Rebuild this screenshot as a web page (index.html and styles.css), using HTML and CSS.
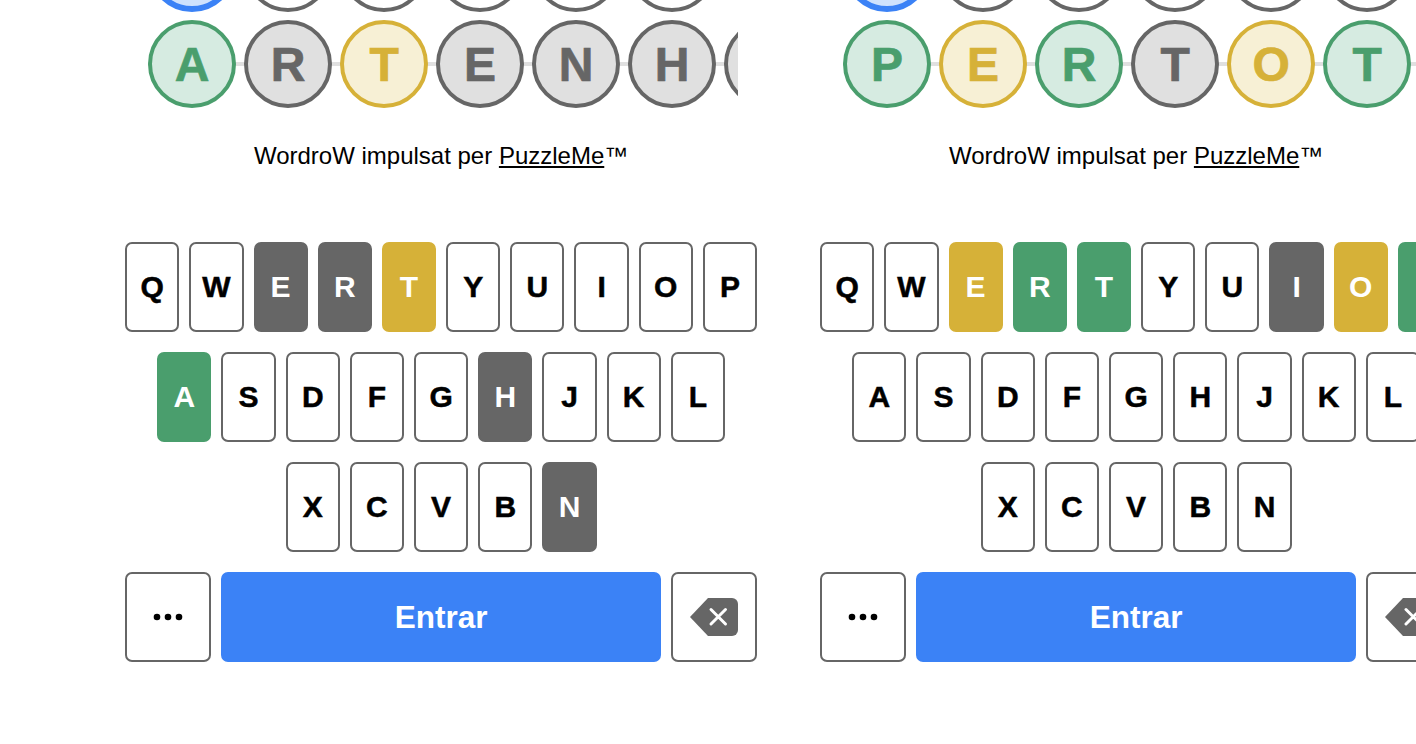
FILE: index.html
```html
<!DOCTYPE html>
<html lang="ca">
<head>
    <meta charset="UTF-8">
    <meta name="viewport" content="width=device-width, initial-scale=1.0">
    <title>WordroW</title>
    <link rel="stylesheet" href="styles.css">
</head>
<body>

<main class="games">

    <section class="game">
        <div class="board">
            <div class="board-row">
                <div class="cell active"></div>
                <div class="cell"></div>
                <div class="cell"></div>
                <div class="cell"></div>
                <div class="cell"></div>
                <div class="cell"></div>
                <div class="cell"></div>
            </div>
            <div class="board-row">
                <div class="cell hit">A</div>
                <div class="cell miss">R</div>
                <div class="cell near">T</div>
                <div class="cell miss">E</div>
                <div class="cell miss">N</div>
                <div class="cell miss">H</div>
                <div class="cell miss"></div>
            </div>
        </div>

        <p class="credit">WordroW impulsat per <a href="#">PuzzleMe</a>™</p>

        <div class="keyboard">
            <div class="key-row">
                <button class="key">Q</button>
                <button class="key">W</button>
                <button class="key miss">E</button>
                <button class="key miss">R</button>
                <button class="key near">T</button>
                <button class="key">Y</button>
                <button class="key">U</button>
                <button class="key">I</button>
                <button class="key">O</button>
                <button class="key">P</button>
            </div>
            <div class="key-row">
                <button class="key hit">A</button>
                <button class="key">S</button>
                <button class="key">D</button>
                <button class="key">F</button>
                <button class="key">G</button>
                <button class="key miss">H</button>
                <button class="key">J</button>
                <button class="key">K</button>
                <button class="key">L</button>
            </div>
            <div class="key-row">
                <button class="key">X</button>
                <button class="key">C</button>
                <button class="key">V</button>
                <button class="key">B</button>
                <button class="key miss">N</button>
            </div>
            <div class="key-row">
                <button class="key wide" aria-label="Més">
                    <svg width="34" height="8" viewBox="0 0 34 8"><circle cx="6" cy="4" r="3.3"/><circle cx="17" cy="4" r="3.3"/><circle cx="28" cy="4" r="3.3"/></svg>
                </button>
                <button class="key enter">Entrar</button>
                <button class="key wide" aria-label="Esborrar">
                    <svg class="back-icon" width="48" height="38" viewBox="0 0 48 38"><path class="back-shape" d="M0 19 L18 0 H42 A6 6 0 0 1 48 6 V32 A6 6 0 0 1 42 38 H18 Z"/><path class="back-cross" d="M21 11.5 L35.5 26 M35.5 11.5 L21 26"/></svg>
                </button>
            </div>
        </div>
    </section>

    <section class="game">
        <div class="board">
            <div class="board-row">
                <div class="cell active"></div>
                <div class="cell"></div>
                <div class="cell"></div>
                <div class="cell"></div>
                <div class="cell"></div>
                <div class="cell"></div>
                <div class="cell"></div>
            </div>
            <div class="board-row">
                <div class="cell hit">P</div>
                <div class="cell near">E</div>
                <div class="cell hit">R</div>
                <div class="cell miss">T</div>
                <div class="cell near">O</div>
                <div class="cell hit">T</div>
                <div class="cell miss"></div>
            </div>
        </div>

        <p class="credit">WordroW impulsat per <a href="#">PuzzleMe</a>™</p>

        <div class="keyboard">
            <div class="key-row">
                <button class="key">Q</button>
                <button class="key">W</button>
                <button class="key near">E</button>
                <button class="key hit">R</button>
                <button class="key hit">T</button>
                <button class="key">Y</button>
                <button class="key">U</button>
                <button class="key miss">I</button>
                <button class="key near">O</button>
                <button class="key hit">P</button>
            </div>
            <div class="key-row">
                <button class="key">A</button>
                <button class="key">S</button>
                <button class="key">D</button>
                <button class="key">F</button>
                <button class="key">G</button>
                <button class="key">H</button>
                <button class="key">J</button>
                <button class="key">K</button>
                <button class="key">L</button>
            </div>
            <div class="key-row">
                <button class="key">X</button>
                <button class="key">C</button>
                <button class="key">V</button>
                <button class="key">B</button>
                <button class="key">N</button>
            </div>
            <div class="key-row">
                <button class="key wide" aria-label="Més">
                    <svg width="34" height="8" viewBox="0 0 34 8"><circle cx="6" cy="4" r="3.3"/><circle cx="17" cy="4" r="3.3"/><circle cx="28" cy="4" r="3.3"/></svg>
                </button>
                <button class="key enter">Entrar</button>
                <button class="key wide" aria-label="Esborrar">
                    <svg class="back-icon" width="48" height="38" viewBox="0 0 48 38"><path class="back-shape" d="M0 19 L18 0 H42 A6 6 0 0 1 48 6 V32 A6 6 0 0 1 42 38 H18 Z"/><path class="back-cross" d="M21 11.5 L35.5 26 M35.5 11.5 L21 26"/></svg>
                </button>
            </div>
        </div>
    </section>

</main>

</body>
</html>
```

FILE: styles.css
```css
html, body {
    height: 100%;
    margin: 0;
    overflow: hidden;
    background-color: white;
    font-family: "Liberation Sans", Arial, sans-serif;
}

.games {
    display: flex;
    gap: 63px;
    padding-left: 125.1px;
    width: 1600px;
}

.game {
    flex: none;
    width: 632px;
}

/* Tauler: la pagina esta desplacada, la fila de dalt queda tallada */
.board {
    display: flex;
    flex-direction: column;
    justify-content: flex-end;
    gap: 8px;
    width: 590px;
    height: 108px;
    margin-left: 23px;
    overflow: hidden;
}

.board-row {
    flex: none;
    display: flex;
    gap: 8px;
    width: 680px;
    background: linear-gradient(#e0e0e0, #e0e0e0) center / 100% 4px no-repeat;
}

.cell {
    flex: none;
    display: flex;
    justify-content: center;
    align-items: center;
    width: 88px;
    height: 88px;
    box-sizing: border-box;
    border: 4px solid #666666;
    border-radius: 50%;
    background-color: white;
    font-size: 48px;
    font-weight: bold;
    -webkit-text-stroke: 0.7px currentColor;
}

.cell.active {
    border: 6px solid #3b82f6;
    background-color: #cfe2fd;
}

.cell.hit {
    border-color: #4a9e6d;
    background-color: #d6ebe1;
    color: #4a9e6d;
}

.cell.near {
    border-color: #d6b138;
    background-color: #f7f0d5;
    color: #d6b138;
}

.cell.miss {
    background-color: #e0e0e0;
    color: #666666;
}

.credit {
    margin: 34px 0 0;
    font-size: 24px;
    line-height: 28px;
    text-align: center;
    color: black;
}

.credit a {
    color: black;
}

.keyboard {
    display: flex;
    flex-direction: column;
    gap: 20px;
    margin-top: 72px;
}

.key-row {
    display: flex;
    justify-content: center;
    gap: 10px;
}

.key {
    flex: none;
    display: flex;
    justify-content: center;
    align-items: center;
    width: 54.2px;
    height: 90px;
    padding: 0;
    box-sizing: border-box;
    border: 2px solid #666666;
    border-radius: 7px;
    background-color: white;
    color: black;
    font-family: inherit;
    font-size: 30px;
    font-weight: bold;
    -webkit-text-stroke: 0.5px black;
}

.key.hit {
    border-color: #4a9e6d;
    background-color: #4a9e6d;
    color: white;
    -webkit-text-stroke: 0;
}

.key.near {
    border-color: #d6b138;
    background-color: #d6b138;
    color: white;
    -webkit-text-stroke: 0;
}

.key.miss {
    background-color: #666666;
    color: white;
    -webkit-text-stroke: 0;
}

.key.wide {
    width: 86px;
}

.key.enter {
    flex: 1;
    border-color: #3b82f6;
    background-color: #3b82f6;
    color: white;
    font-size: 31.5px;
    -webkit-text-stroke: 0;
}

.back-shape {
    fill: #666666;
}

.back-cross {
    fill: none;
    stroke: white;
    stroke-width: 3;
    stroke-linecap: round;
}
```
